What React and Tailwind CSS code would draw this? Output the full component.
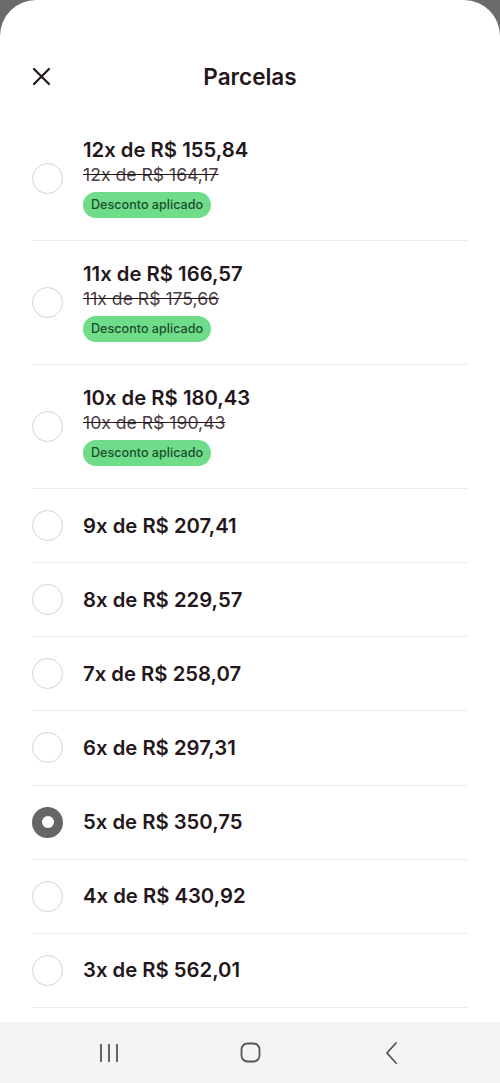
import React from 'react';

const discounted = [
  { n: 12, price: '155,84', old: '164,17' },
  { n: 11, price: '166,57', old: '175,66' },
  { n: 10, price: '180,43', old: '190,43' },
];

const plain = [
  { n: 9, price: '207,41' },
  { n: 8, price: '229,57' },
  { n: 7, price: '258,07' },
  { n: 6, price: '297,31' },
  { n: 5, price: '350,75', selected: true },
  { n: 4, price: '430,92' },
  { n: 3, price: '562,01' },
];

const Radio = ({ selected }) =>
  selected ? (
    <div className="w-[31px] h-[31px] rounded-full bg-[#666666] flex items-center justify-center shrink-0">
      <div className="w-[12px] h-[12px] rounded-full bg-white" />
    </div>
  ) : (
    <div className="w-[31px] h-[31px] rounded-full border border-[#d4d4d4] shrink-0" />
  );

export default function App() {
  return (
    <div className="w-[500px] h-[1083px] bg-[#6a6a6a] overflow-hidden" style={{ fontFamily: 'Inter, "Noto Sans", sans-serif' }}>
      <div className="h-full bg-white rounded-t-[36px] flex flex-col">
        {/* Header */}
        <div className="h-[117px] shrink-0 relative flex items-center justify-center pt-[38px]">
          <svg className="absolute left-[32px] top-[67px]" width="19" height="19" viewBox="0 0 19 19" fill="none" stroke="#24171b" strokeWidth="2.2" strokeLinecap="round">
            <path d="M2 2L17 17M17 2L2 17" />
          </svg>
          <span className="text-[22.5px] font-semibold text-[#24171b] leading-none">Parcelas</span>
        </div>

        {/* Options */}
        <div className="flex-1 px-[32px] flex flex-col">
          {discounted.map((o) => (
            <div key={o.n} className="h-[124px] shrink-0 border-b border-[#ececec] flex items-center gap-[20px]">
              <Radio />
              <div className="flex flex-col items-start -mt-[2px]">
                <span className="text-[20.3px] leading-[26px] font-semibold text-[#24171b]">{o.n}x de R$ {o.price}</span>
                <span className="text-[17.6px] leading-[24px] text-[#4a4044] line-through decoration-[#24171b]">{o.n}x de R$ {o.old}</span>
                <span className="mt-[5px] h-[26px] px-[8px] rounded-full bg-[#6fdc8a] text-[12.6px] font-medium text-[#1c4f2b] flex items-center">Desconto aplicado</span>
              </div>
            </div>
          ))}
          {plain.map((o) => (
            <div key={o.n} className="h-[74.15px] shrink-0 border-b border-[#ececec] flex items-center gap-[20px]">
              <Radio selected={o.selected} />
              <span className="text-[20.3px] leading-[26px] font-semibold text-[#24171b]">{o.n}x de R$ {o.price}</span>
            </div>
          ))}
        </div>

        {/* Android nav bar */}
        <div className="h-[61px] shrink-0 bg-[#f4f4f6] flex items-center justify-between px-[98px]">
          <div className="w-[22px] flex justify-center">
            <svg width="20" height="22" viewBox="0 0 20 22" fill="none" stroke="#555" strokeWidth="1.8">
              <path d="M2 2V20M10 2V20M18 2V20" />
            </svg>
          </div>
          <div className="w-[22px] flex justify-center">
            <svg width="21" height="21" viewBox="0 0 21 21" fill="none" stroke="#555" strokeWidth="1.8">
              <rect x="1.5" y="1.5" width="18" height="18" rx="6" />
            </svg>
          </div>
          <div className="w-[22px] flex justify-center">
            <svg width="14" height="24" viewBox="0 0 14 24" fill="none" stroke="#555" strokeWidth="1.8" strokeLinecap="round">
              <path d="M12 2L3 12L12 22" />
            </svg>
          </div>
        </div>
      </div>
    </div>
  );
}
